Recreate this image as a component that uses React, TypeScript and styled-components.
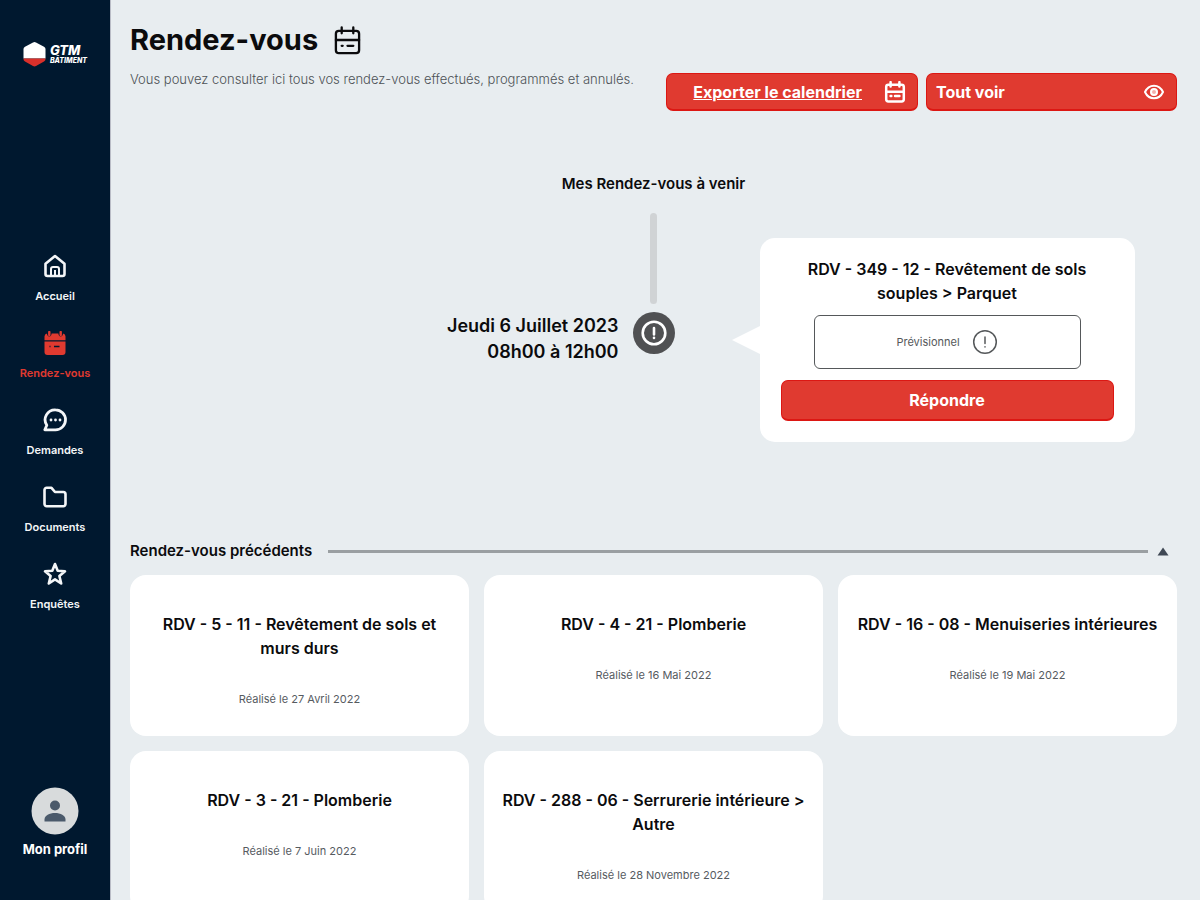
import React from "react";
import styled, { createGlobalStyle } from "styled-components";

const GlobalStyle = createGlobalStyle`
  *, *::before, *::after { box-sizing: border-box; }
  body { margin: 0; background: #e8edf0; }
  body, button { font-family: Inter, "Open Sans", sans-serif; }
  h1, h2, h3, p { margin: 0; }
  a { color: inherit; }
`;

const Shell = styled.div`
  display: flex;
  height: 100vh;
  color: #0b0b0d;
`;

const Sidebar = styled.aside`
  display: flex;
  flex-direction: column;
  align-items: center;
  justify-content: space-between;
  flex: none;
  width: 111px;
  padding: 40px 0 42px;
  overflow: hidden;
  background: #00182f;
  border-right: 1px solid #b9bcc6;
  color: #fff;
`;

const LogoLink = styled.a`
  display: block;
  height: 38px;
  text-decoration: none;
`;

const Nav = styled.nav`
  display: flex;
  flex-direction: column;
  gap: 28px;
`;

const NavLink = styled.a<{ $active?: boolean }>`
  display: flex;
  flex-direction: column;
  align-items: center;
  gap: 11px;
  font-size: 11px;
  line-height: 14px;
  font-weight: 600;
  text-decoration: none;
  color: ${(p) => (p.$active ? "#e03a30" : "#f4f6f8")};
`;

const Profile = styled.a`
  display: flex;
  flex-direction: column;
  align-items: center;
  gap: 5px;
  font-size: 13px;
  line-height: 18px;
  font-weight: 700;
  text-decoration: none;
`;

const Main = styled.main`
  flex: 1;
  min-width: 0;
  padding: 20px 23px 20px 19px;
  overflow-y: auto;
  scrollbar-width: none;
`;

const Header = styled.header`
  display: flex;
  align-items: flex-end;
  justify-content: space-between;
  gap: 20px;
`;

const Intro = styled.div`
  padding-bottom: 23px;
`;

const TitleRow = styled.div`
  display: flex;
  align-items: center;
  gap: 15px;
`;

const Title = styled.h1`
  font-size: 29px;
  line-height: 40px;
  font-weight: 700;
`;

const Subtitle = styled.p`
  margin-top: 10px;
  font-size: 13px;
  line-height: 18px;
  font-weight: 300;
  color: #4d5256;
`;

const Actions = styled.div`
  display: flex;
  flex: none;
  width: 49%;
  max-width: 511px;
  gap: 8px;
`;

const redSurface = `
  background: #e03a30;
  border: 1px solid #dc1713;
  border-bottom-width: 2px;
  border-radius: 7px;
  color: #fff;
  font-weight: 700;
  cursor: pointer;
`;

const ExportLink = styled.a`
  ${redSurface}
  display: flex;
  flex: 1 1 0;
  align-items: center;
  justify-content: flex-end;
  gap: 22px;
  height: 38px;
  padding: 0 11px;
  font-size: 16px;
  line-height: 20px;
  white-space: nowrap;
`;

const ShowAllButton = styled.button`
  ${redSurface}
  display: flex;
  flex: 1 1 0;
  align-items: center;
  justify-content: space-between;
  height: 38px;
  padding: 0 12px 0 9px;
  font-size: 16px;
  line-height: 20px;
`;

const Upcoming = styled.section`
  padding-top: 61px;
`;

const SectionTitle = styled.h2`
  font-size: 15px;
  line-height: 24px;
  font-weight: 600;
`;

const CenteredTitle = styled(SectionTitle)`
  text-align: center;
`;

const Timeline = styled.div`
  display: grid;
  grid-template-columns: 1fr 42px 1fr;
  gap: 14px;
  padding-top: 17px;
`;

const When = styled.p`
  padding-top: 100px;
  font-size: 18px;
  line-height: 26px;
  font-weight: 600;
  text-align: right;
`;

const Track = styled.div`
  display: flex;
  flex-direction: column;
  align-items: center;
  gap: 8px;
`;

const TrackLine = styled.span`
  width: 7px;
  height: 91px;
  border-radius: 4px;
  background: #d0d3d5;
`;

const TrackDot = styled.span`
  display: flex;
  align-items: center;
  justify-content: center;
  width: 42px;
  height: 42px;
  border-radius: 50%;
  background: #505153;
  color: #fff;
`;

const Bubble = styled.article`
  position: relative;
  width: 375px;
  max-width: 100%;
  margin: 25px 0 0 71px;
  padding: 19px 21px 21px;
  border-radius: 15px;
  background: #fff;
  text-align: center;

  &::before {
    content: "";
    position: absolute;
    top: 88px;
    right: 100%;
    border: solid transparent;
    border-width: 14px 28px 14px 0;
    border-right-color: #fff;
  }
`;

const CardTitle = styled.h3`
  font-size: 16px;
  line-height: 24px;
  font-weight: 600;
`;

const BubbleTitle = styled(CardTitle)`
  padding: 0 20px;
`;

const Status = styled.p`
  display: flex;
  align-items: center;
  justify-content: center;
  gap: 12px;
  height: 54px;
  margin: 10px 33px 11px;
  border: 1px solid #55585a;
  border-radius: 6px;
  font-size: 11px;
  line-height: 16px;
  color: #55585a;
`;

const ReplyButton = styled.button`
  ${redSurface}
  display: block;
  width: 100%;
  height: 41px;
  font-size: 16px;
  line-height: 20px;
`;

const Previous = styled.section`
  padding-top: 97px;
`;

const PreviousHead = styled.div`
  display: flex;
  align-items: center;
  padding-right: 8px;
`;

const Rule = styled.hr`
  flex: 1;
  height: 3px;
  margin: 0 9px 0 16px;
  border: 0;
  background: #9a9fa2;
`;

const Toggle = styled.button`
  display: flex;
  padding: 0;
  border: 0;
  background: none;
  color: #3f4854;
  cursor: pointer;
`;

const Cards = styled.div`
  display: grid;
  grid-template-columns: repeat(3, 1fr);
  gap: 15px;
  margin-top: 12px;
`;

const Card = styled.article`
  min-height: 161px;
  padding: 37px 15px 26px;
  border-radius: 16px;
  background: #fff;
  text-align: center;
`;

const Done = styled.p`
  margin-top: 30px;
  font-size: 11px;
  line-height: 18px;
  color: #565b5f;
`;

const CalendarIcon = ({ size, width }: { size: number; width: number }) => (
  <svg width={size} height={size} viewBox="0 0 28 30" fill="none" stroke="currentColor" strokeWidth={width} strokeLinecap="round" aria-hidden="true">
    <rect x="2" y="5" width="24" height="23" rx="3" />
    <path d="M2 14.500h24M8 1.500v6M20 1.500v6" />
    <path d="M8 20.500h1M14 20.500h6" />
  </svg>
);

const SolidCalendarIcon = () => (
  <svg width="24" height="24" viewBox="0 0 24 24" fill="none" aria-hidden="true">
    <path d="M1.500 10.500h21V21a3 3 0 0 1-3 3h-15a3 3 0 0 1-3-3z" fill="currentColor" />
    <path d="M1.500 9.300V5.500a3 3 0 0 1 2.500-3c0 4 4.600 4 4.600 0h6.800c0 4 4.600 4 4.600 0a3 3 0 0 1 2.500 3v3.800z" fill="currentColor" />
    <path d="M6.300 1v3M17.700 1v3" stroke="currentColor" strokeWidth="2.400" strokeLinecap="round" />
    <path d="M6.500 15.500h1M11 15.500h5.500" stroke="#00182f" strokeWidth="1.400" />
  </svg>
);

const HomeIcon = () => (
  <svg width="24" height="24" viewBox="0 0 24 24" fill="none" stroke="currentColor" strokeWidth="2.600" strokeLinejoin="round" aria-hidden="true">
    <path d="M2.500 9.800 12 2l9.500 7.800V20a2 2 0 0 1-2 2h-15a2 2 0 0 1-2-2z" />
    <path d="M8 21.500v-6.500a2 2 0 0 1 2-2h4a2 2 0 0 1 2 2v6.500M12 16v5.500" strokeWidth="2" />
  </svg>
);

const ChatIcon = () => (
  <svg width="24" height="24" viewBox="0 0 24 24" fill="none" stroke="currentColor" strokeWidth="2.800" strokeLinecap="round" strokeLinejoin="round" aria-hidden="true">
    <path d="M12.500 1.800a10 10 0 1 1 0 20H1.800l2-4.500A10 10 0 0 1 12.500 1.800z" />
    <path d="M8 12h.01M12.500 12h.01M17 12h.01" />
  </svg>
);

const FolderIcon = () => (
  <svg width="24" height="24" viewBox="0 0 24 24" fill="none" stroke="currentColor" strokeWidth="2.600" strokeLinejoin="round" aria-hidden="true">
    <path d="M1.500 19V5a2.200 2.200 0 0 1 2.200-2.200h4.800L12 7h8.300a2.200 2.200 0 0 1 2.200 2.200V19a2.200 2.200 0 0 1-2.200 2.200H3.700A2.200 2.200 0 0 1 1.500 19z" />
  </svg>
);

const StarIcon = () => (
  <svg width="24" height="24" viewBox="0 0 24 24" fill="none" stroke="currentColor" strokeWidth="2.600" strokeLinejoin="round" aria-hidden="true">
    <path d="m12 2 2.700 6.800 7.300.5-5.600 4.700 1.800 7.500L12 17.400l-6.200 4.100 1.800-7.500L2 9.300l7.300-.5z" />
  </svg>
);

const AlertIcon = ({ width }: { width: number }) => (
  <svg width="26" height="26" viewBox="0 0 26 26" fill="none" stroke="currentColor" strokeWidth={width} strokeLinecap="round" aria-hidden="true">
    <circle cx="13" cy="13" r="11.300" />
    <path d="M13 8v6.500M13 17.800v.2" />
  </svg>
);

const EyeIcon = () => (
  <svg width="20" height="16" viewBox="0 0 20 16" fill="none" stroke="currentColor" strokeWidth="2" aria-hidden="true">
    <path d="M1 8c2-4.300 5.300-6.300 9-6.300S17 3.700 19 8c-2 4.300-5.300 6.300-9 6.300S3 12.300 1 8z" />
    <circle cx="10" cy="8" r="3" fill="currentColor" fillOpacity=".6" />
  </svg>
);

const LogoMark = styled.span`
  display: flex;
  align-items: center;
  gap: 4px;
`;

const LogoText = styled.span`
  display: flex;
  flex-direction: column;
  font-style: italic;
  font-weight: 800;
`;

const LogoName = styled.span`
  font-size: 13px;
  line-height: 14px;
`;

const LogoSub = styled.span`
  font-size: 7px;
  line-height: 8px;
`;

const Logo = () => (
  <LogoMark>
    <svg width="23" height="28" viewBox="0 0 23 28" aria-hidden="true">
      <path d="M10 2.400q1.500-.8 3 0l8 4.300q1.500.8 1.500 2.300v9.500h-22V9q0-1.500 1.500-2.300z" fill="#fff" />
      <path d="M.5 18.500h22v.8q0 1.500-1.500 2.300l-8 4.500q-1.500.8-3 0l-8-4.500Q.5 20.800.5 19.300z" fill="#d9302b" />
    </svg>
    <LogoText>
      <LogoName>GTM</LogoName>
      <LogoSub>BÂTIMENT</LogoSub>
    </LogoText>
  </LogoMark>
);

const Avatar = () => (
  <svg width="48" height="48" viewBox="0 0 48 48" aria-hidden="true">
    <circle cx="24" cy="24" r="23.500" fill="#d8dbdc" />
    <circle cx="24" cy="18.500" r="5" fill="#4b5a6b" />
    <path d="M13.500 34.500v-2c0-4 5-6.500 10.500-6.500s10.500 2.500 10.500 6.500v2z" fill="#4b5a6b" />
  </svg>
);

const navItems = [
  { label: "Accueil", icon: <HomeIcon /> },
  { label: "Rendez-vous", icon: <SolidCalendarIcon />, active: true },
  { label: "Demandes", icon: <ChatIcon /> },
  { label: "Documents", icon: <FolderIcon /> },
  { label: "Enquêtes", icon: <StarIcon /> },
];

const previousItems = [
  { title: "RDV - 5 - 11 - Revêtement de sols et murs durs", date: "27 Avril 2022" },
  { title: "RDV - 4 - 21 - Plomberie", date: "16 Mai 2022" },
  { title: "RDV - 16 - 08 - Menuiseries intérieures", date: "19 Mai 2022" },
  { title: "RDV - 3 - 21 - Plomberie", date: "7 Juin 2022" },
  { title: "RDV - 288 - 06 - Serrurerie intérieure > Autre", date: "28 Novembre 2022" },
];

export default function App() {
  return (
    <Shell>
      <GlobalStyle />
      <Sidebar>
        <LogoLink href="#"><Logo /></LogoLink>
        <Nav>
          {navItems.map((item) => (
            <NavLink key={item.label} href="#" $active={item.active} aria-current={item.active ? "page" : undefined}>
              {item.icon}
              {item.label}
            </NavLink>
          ))}
        </Nav>
        <Profile href="#">
          <Avatar />
          Mon profil
        </Profile>
      </Sidebar>
      <Main>
        <Header>
          <Intro>
            <TitleRow>
              <Title>Rendez-vous</Title>
              <CalendarIcon size={29} width={2.4} />
            </TitleRow>
            <Subtitle>Vous pouvez consulter ici tous vos rendez-vous effectués, programmés et annulés.</Subtitle>
          </Intro>
          <Actions>
            <ExportLink href="#">
              Exporter le calendrier
              <CalendarIcon size={22} width={3.4} />
            </ExportLink>
            <ShowAllButton type="button">
              Tout voir
              <EyeIcon />
            </ShowAllButton>
          </Actions>
        </Header>
        <Upcoming>
          <CenteredTitle>Mes Rendez-vous à venir</CenteredTitle>
          <Timeline>
            <When>
              Jeudi 6 Juillet 2023
              <br />
              08h00 à 12h00
            </When>
            <Track>
              <TrackLine />
              <TrackDot><AlertIcon width={2.6} /></TrackDot>
            </Track>
            <Bubble>
              <BubbleTitle>RDV - 349 - 12 - Revêtement de sols souples &gt; Parquet</BubbleTitle>
              <Status>
                Prévisionnel
                <AlertIcon width={1.5} />
              </Status>
              <ReplyButton type="button">Répondre</ReplyButton>
            </Bubble>
          </Timeline>
        </Upcoming>
        <Previous>
          <PreviousHead>
            <SectionTitle>Rendez-vous précédents</SectionTitle>
            <Rule />
            <Toggle type="button" aria-label="Replier les rendez-vous précédents">
              <svg width="12" height="9" viewBox="0 0 12 9" aria-hidden="true">
                <path d="M6 .5 11.500 8.500H.5z" fill="currentColor" />
              </svg>
            </Toggle>
          </PreviousHead>
          <Cards>
            {previousItems.map((item) => (
              <Card key={item.title}>
                <CardTitle>{item.title}</CardTitle>
                <Done>Réalisé le {item.date}</Done>
              </Card>
            ))}
          </Cards>
        </Previous>
      </Main>
    </Shell>
  );
}
